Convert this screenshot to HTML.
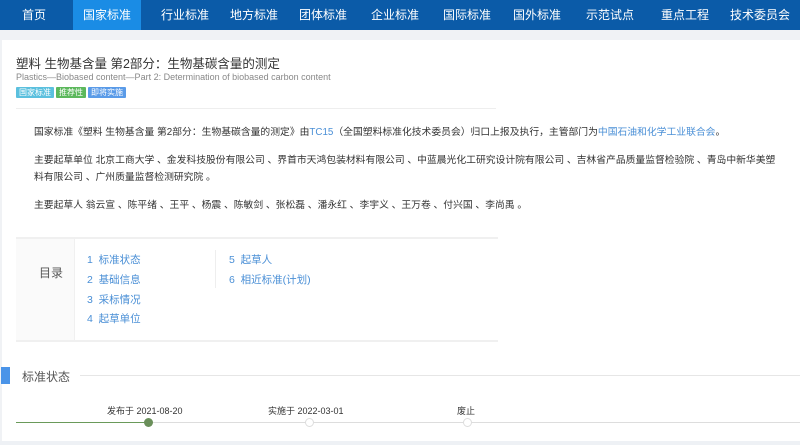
<!DOCTYPE html>
<html><head><meta charset="utf-8"><style>
*{margin:0;padding:0;box-sizing:border-box}
body{width:800px;height:445px;overflow:hidden;background:#f0f2f5;font-family:"Liberation Sans","Noto Sans CJK SC",sans-serif;position:relative}
.nav{position:absolute;left:0;top:0;width:800px;height:30px;background:#0b5ba8}
.nav span{position:absolute;top:0;height:30px;line-height:30px;color:#fff;font-size:12px;text-align:center}
.card{position:absolute;left:2px;top:40px;width:798px;height:405px;background:#fff}
.a{position:absolute;white-space:nowrap}
.p{position:absolute;left:34px;font-size:9.8px;color:#333;line-height:17px;width:760px;white-space:nowrap}
.tag{display:inline-block;vertical-align:top;font-size:8px;color:#fff;height:11px;line-height:11px;padding:0 3px;margin-right:2px;border-radius:1px}
.toc{font-size:10.5px;color:#4a8fd6}
</style></head><body>
<div class="nav">
<span style="left:12px;width:44px">首页</span>
<span style="left:73px;width:68px;background:#1a8ce5">国家标准</span>
<span style="left:151px;width:68px">行业标准</span>
<span style="left:220px;width:68px">地方标准</span>
<span style="left:289px;width:68px">团体标准</span>
<span style="left:361px;width:68px">企业标准</span>
<span style="left:433px;width:68px">国际标准</span>
<span style="left:503px;width:68px">国外标准</span>
<span style="left:576px;width:68px">示范试点</span>
<span style="left:651px;width:68px">重点工程</span>
<span style="left:726px;width:68px">技术委员会</span>
</div>
<div class="card"></div>
<div class="a" style="left:16px;top:53px;font-size:12.5px;color:#333">塑料 生物基含量 第2部分：生物基碳含量的测定</div>
<div class="a" style="left:16px;top:72px;font-size:9px;color:#888">Plastics—Biobased content—Part 2: Determination of biobased carbon content</div>
<div class="a" style="left:16px;top:87px;line-height:11px;height:11px"><span class="tag" style="background:#5bc0de">国家标准</span><span class="tag" style="background:#5cb85c">推荐性</span><span class="tag" style="background:#5a9be8">即将实施</span></div>
<div style="position:absolute;left:16px;top:108px;width:480px;height:1px;background:#eee"></div>
<div class="p" style="top:124px">国家标准《塑料 生物基含量 第2部分：生物基碳含量的测定》由<span style="color:#4a8fd6">TC15</span>（全国塑料标准化技术委员会）归口上报及执行，主管部门为<span style="color:#4a8fd6">中国石油和化学工业联合会</span>。</div>
<div class="p" style="top:152px">主要起草单位 北京工商大学 、金发科技股份有限公司 、界首市天鸿包装材料有限公司 、中蓝晨光化工研究设计院有限公司 、吉林省产品质量监督检验院 、青岛中新华美塑<br>料有限公司 、广州质量监督检测研究院 。</div>
<div class="p" style="top:197px">主要起草人 翁云宣 、陈平绪 、王平 、杨震 、陈敏剑 、张松磊 、潘永红 、李宇义 、王万卷 、付兴国 、李尚禹 。</div>
<div style="position:absolute;left:16px;top:237px;width:482px;height:105px;background:#fff;border-top:2px solid #f0f0f0;border-bottom:2px solid #f0f0f0"></div>
<div style="position:absolute;left:16px;top:239px;width:59px;height:101px;background:#fafafa;border-right:1px solid #f0f0f0"></div>
<div class="a" style="left:39px;top:264px;font-size:12px;color:#555">目录</div>
<div style="position:absolute;left:215px;top:250px;width:1px;height:38px;background:#eee"></div>
<div class="a toc" style="left:87px;top:252px">1 &nbsp;标准状态</div>
<div class="a toc" style="left:87px;top:272px">2 &nbsp;基础信息</div>
<div class="a toc" style="left:87px;top:292px">3 &nbsp;采标情况</div>
<div class="a toc" style="left:87px;top:311px">4 &nbsp;起草单位</div>
<div class="a toc" style="left:229px;top:252px">5 &nbsp;起草人</div>
<div class="a toc" style="left:229px;top:272px">6 &nbsp;相近标准(计划)</div>
<div style="position:absolute;left:1px;top:367px;width:9px;height:17px;background:#4a94e8"></div>
<div class="a" style="left:22px;top:368px;font-size:12px;color:#555">标准状态</div>
<div style="position:absolute;left:80px;top:375px;width:720px;height:1px;background:#e6e6e6"></div>
<div class="a" style="left:107px;top:404px;font-size:9px;color:#333">发布于 2021-08-20</div>
<div class="a" style="left:268px;top:404px;font-size:9px;color:#333">实施于 2022-03-01</div>
<div class="a" style="left:457px;top:404px;font-size:9px;color:#333">废止</div>
<div style="position:absolute;left:16px;top:422px;width:784px;height:1px;background:#ddd"></div>
<div style="position:absolute;left:16px;top:422px;width:133px;height:1px;background:#6a9a5a"></div>
<div style="position:absolute;left:144px;top:418px;width:9px;height:9px;border-radius:50%;background:#6a8f5a"></div>
<div style="position:absolute;left:305px;top:418px;width:9px;height:9px;border-radius:50%;background:#fff;border:1.5px solid #ddd"></div>
<div style="position:absolute;left:463px;top:418px;width:9px;height:9px;border-radius:50%;background:#fff;border:1.5px solid #ddd"></div>
<div style="position:absolute;left:0;top:441px;width:800px;height:4px;background:#eef1f5"></div>
</body></html>
